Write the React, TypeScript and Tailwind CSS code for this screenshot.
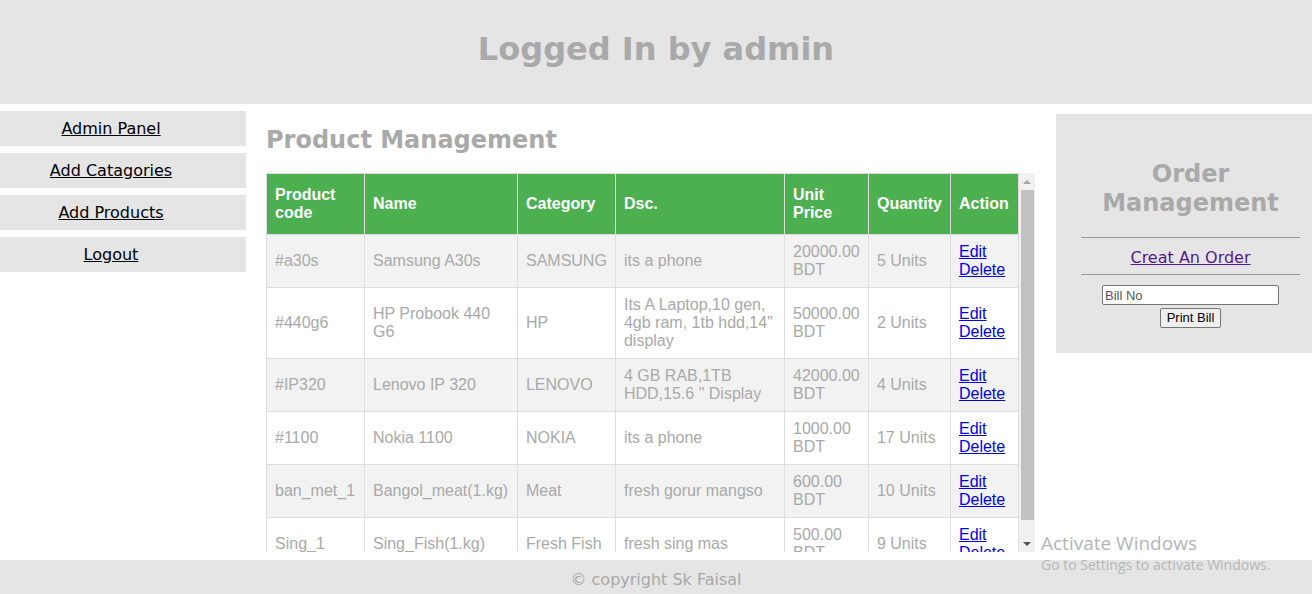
import React from "react";

type Product = {
  code: string;
  name: string;
  category: string;
  dsc: string;
  price: string;
  qty: string;
};

const products: Product[] = [
  { code: "#a30s", name: "Samsung A30s", category: "SAMSUNG", dsc: "its a phone", price: "20000.00 BDT", qty: "5 Units" },
  { code: "#440g6", name: "HP Probook 440 G6", category: "HP", dsc: "Its A Laptop,10 gen, 4gb ram, 1tb hdd,14\" display", price: "50000.00 BDT", qty: "2 Units" },
  { code: "#IP320", name: "Lenovo IP 320", category: "LENOVO", dsc: "4 GB RAB,1TB HDD,15.6 \" Display", price: "42000.00 BDT", qty: "4 Units" },
  { code: "#1100", name: "Nokia 1100", category: "NOKIA", dsc: "its a phone", price: "1000.00 BDT", qty: "17 Units" },
  { code: "ban_met_1", name: "Bangol_meat(1.kg)", category: "Meat", dsc: "fresh gorur mangso", price: "600.00 BDT", qty: "10 Units" },
  { code: "Sing_1", name: "Sing_Fish(1.kg)", category: "Fresh Fish", dsc: "fresh sing mas", price: "500.00 BDT", qty: "9 Units" },
  { code: "Ruhi_1", name: "Ruhi_Fish(1.kg)", category: "Fresh Fish", dsc: "fresh ruhi mas", price: "350.00 BDT", qty: "12 Units" },
];

const verdana = "font-['DejaVu_Sans',Verdana,sans-serif]";
const arial = "font-['Liberation_Sans',Arial,sans-serif]";

const sideLinks = ["Admin Panel", "Add Catagories", "Add Products", "Logout"];

export default function App() {
  return (
    <div className={`relative h-[594px] w-[1312px] overflow-hidden bg-white ${verdana}`}>
      <header className="flex h-[104px] items-center justify-center bg-[#e5e5e5] pb-[6px]">
        <h1 className="text-[32px] font-bold text-[#a9a9a9]">Logged In by admin</h1>
      </header>

      <div className="flex h-[449px] pt-[7px]">
        <nav className="flex w-[246px] shrink-0 flex-col gap-[7px]">
          {sideLinks.map((l) => (
            <a key={l} href="#" className="flex h-[35px] items-center justify-center bg-[#e5e5e5] pr-[24px] text-[16px] text-black underline">
              {l}
            </a>
          ))}
        </nav>

        <main className="ml-[20px] w-[769px] shrink-0">
          <h2 className="mb-[17px] mt-[13px] text-[24px] font-bold leading-[32px] text-[#a9a9a9]">Product Management</h2>
          <div className="flex h-[379px]">
            <div className="w-[753px] overflow-hidden">
              <table className={`w-[753px] border-collapse text-[16px] leading-[18px] ${arial}`}>
                <thead>
                  <tr className="bg-[#4CAF50] text-left text-white">
                    <th className="w-[98px] border border-[#ddd] px-[8px] py-[12px] font-bold">Product code</th>
                    <th className="w-[153px] border border-[#ddd] px-[8px] py-[12px] font-bold">Name</th>
                    <th className="w-[98px] border border-[#ddd] px-[8px] py-[12px] font-bold">Category</th>
                    <th className="w-[170px] border border-[#ddd] px-[8px] py-[12px] font-bold">Dsc.</th>
                    <th className="w-[84px] border border-[#ddd] px-[8px] py-[12px] font-bold">Unit Price</th>
                    <th className="w-[82px] border border-[#ddd] px-[8px] py-[12px] font-bold">Quantity</th>
                    <th className="w-[68px] border border-[#ddd] px-[8px] py-[12px] font-bold">Action</th>
                  </tr>
                </thead>
                <tbody className="text-[#a9a9a9]">
                  {products.map((p, i) => (
                    <tr key={p.code} className={i % 2 === 0 ? "bg-[#f2f2f2]" : "bg-white"}>
                      <td className="border border-[#ddd] p-[8px]">{p.code}</td>
                      <td className="border border-[#ddd] p-[8px]">{p.name}</td>
                      <td className="border border-[#ddd] p-[8px]">{p.category}</td>
                      <td className="border border-[#ddd] p-[8px]">{p.dsc}</td>
                      <td className="border border-[#ddd] p-[8px]">{p.price}</td>
                      <td className="border border-[#ddd] p-[8px]">{p.qty}</td>
                      <td className="border border-[#ddd] p-[8px]">
                        <a href="#" className="text-[#0000ee] underline">Edit</a>
                        <br />
                        <a href="#" className="text-[#0000ee] underline">Delete</a>
                      </td>
                    </tr>
                  ))}
                </tbody>
              </table>
            </div>
            {/* scrollbar */}
            <div className="flex w-[16px] flex-col items-center bg-[#f1f1f1]">
              <div className="flex h-[17px] items-center justify-center">
                <span className="h-0 w-0 border-x-[4px] border-b-[4px] border-x-transparent border-b-[#a3a3a3]" />
              </div>
              <div className="w-[13px] flex-1">
                <div className="h-[330px] w-full bg-[#c1c1c1]" />
              </div>
              <div className="flex h-[17px] items-center justify-center">
                <span className="h-0 w-0 border-x-[4px] border-t-[4px] border-x-transparent border-t-[#505050]" />
              </div>
            </div>
          </div>
        </main>

        <aside className="ml-[21px] mt-[3px] flex h-[239px] w-[256px] flex-col items-center bg-[#e5e5e5] pl-[25px] pr-[12px] pt-[46px]">
          <h2 className="text-center text-[24px] font-bold leading-[29px] text-[#a9a9a9]">Order Management</h2>
          <hr className="mt-[19px] w-[219px] border-t border-[#999]" />
          <a href="#" className="mt-[8px] text-[16px] text-[#551a8b] underline">Creat An Order</a>
          <hr className="mt-[4px] w-[219px] border-t border-[#999]" />
          <input
            placeholder="Bill No"
            className={`mt-[10px] h-[20px] w-[177px] rounded-[2px] border border-[#767676] bg-white px-[2px] text-[13px] placeholder:text-[#555] ${arial}`}
          />
          <button className={`mt-[3px] h-[20px] rounded-[2px] border border-[#767676] bg-[#efefef] px-[6px] text-[13px] leading-[16px] text-black ${arial}`}>
            Print Bill
          </button>
        </aside>
      </div>

      <footer className="mt-[7px] flex h-[34px] items-center justify-center bg-[#e5e5e5] pt-[6px]">
        <p className="text-[16px] text-[#a9a9a9]">© copyright Sk Faisal</p>
      </footer>

      <div className="pointer-events-none absolute left-[1041px] top-[531px] font-['Open_Sans',sans-serif] text-[#b5b5b5]">
        <div className="text-[19px] leading-[24px]">Activate Windows</div>
        <div className="text-[14px] leading-[20px]">Go to Settings to activate Windows.</div>
      </div>
    </div>
  );
}
